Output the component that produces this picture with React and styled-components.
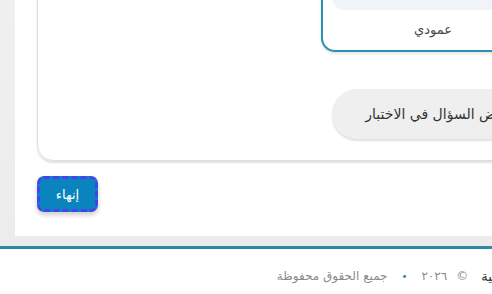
import React from 'react';
import styled, { createGlobalStyle } from 'styled-components';

const GlobalStyle = createGlobalStyle`
  *, *::before, *::after {
    box-sizing: border-box;
  }
  html, body {
    margin: 0;
    padding: 0;
    background: #ffffff;
    overflow: hidden;
  }
  body {
    font-family: 'DejaVu Sans', 'Noto Sans', sans-serif;
  }
`;

const Page = styled.div`
  width: 592px;
  direction: rtl;
  margin-top: -172px;
`;

const Main = styled.main`
  padding: 0 0 10px 15px;
  background: linear-gradient(180deg, #f3f3f3 0%, #ececec 100%);
  border-bottom: 3px solid #2c8aa7;
`;

const Panel = styled.section`
  background: #ffffff;
  padding: 20px 22px 24px 22px;
  display: flex;
  flex-direction: column;
  align-items: stretch;
`;

const Card = styled.div`
  border: 1px solid #dedede;
  border-radius: 16px;
  box-shadow: 0 2px 2px rgba(0, 0, 0, 0.12);
  padding: 20px 24px 21px 24px;
  display: flex;
  flex-direction: column;
  align-items: flex-start;
  gap: 37px;
`;

const Option = styled.div`
  width: 224px;
  border: 2px solid #2a90b6;
  border-radius: 14px;
  padding: 10px 10px 0 10px;
  box-shadow: 0 2px 3px rgba(0, 0, 0, 0.1);
  display: flex;
  flex-direction: column;
`;

const Preview = styled.div`
  height: 129px;
  background: #f0f3f8;
  border-radius: 10px;
`;

const OptionLabel = styled.div`
  height: 40px;
  line-height: 40px;
  text-align: center;
  font-size: 13px;
  color: #4a4a4a;
`;

const Toggle = styled.button`
  font-family: inherit;
  border: none;
  background: #efefef;
  border-radius: 25px;
  height: 50px;
  padding: 0 33px;
  font-size: 14px;
  color: #333;
  box-shadow: 0 2px 2px rgba(0, 0, 0, 0.12);
`;

const Actions = styled.div`
  display: flex;
  justify-content: flex-end;
  padding-top: 15px;
`;

const FinishButton = styled.button`
  font-family: inherit;
  width: 61px;
  height: 36px;
  background: #0a84bf;
  color: #ffffff;
  font-size: 13px;
  border: 3px dashed #4b3ff0;
  border-radius: 7px;
  box-shadow: 0 3px 5px rgba(0, 0, 0, 0.2);
`;

const Footer = styled.footer`
  background: #ffffff;
  height: 54px;
  display: flex;
  align-items: center;
  gap: 13px;
  padding-right: 25px;
  font-size: 12px;
`;

const Brand = styled.span`
  color: #333;
  font-size: 13px;
`;

const Copy = styled.span`
  color: #8a8a8a;
  display: flex;
  gap: 14px;
  align-items: center;
`;

const Year = styled.span`
  display: flex;
  gap: 9px;
`;

const Dot = styled.span`
  color: #2c8aa7;
  font-size: 10px;
`;

export default function App() {
  return (
    <>
      <GlobalStyle />
      <Page>
        <Main>
          <Panel>
            <Card>
              <Option>
                <Preview />
                <OptionLabel>عمودي</OptionLabel>
              </Option>
              <Toggle>عرض السؤال في الاختبار</Toggle>
            </Card>
            <Actions>
              <FinishButton>إنهاء</FinishButton>
            </Actions>
          </Panel>
        </Main>
        <Footer>
          <Brand>المنصة التعليمية</Brand>
          <Copy>
            <Year>
              <span>©</span>
              <span>٢٠٢٦</span>
            </Year>
            <Dot>•</Dot>
            <span>جميع الحقوق محفوظة</span>
          </Copy>
        </Footer>
      </Page>
    </>
  );
}
